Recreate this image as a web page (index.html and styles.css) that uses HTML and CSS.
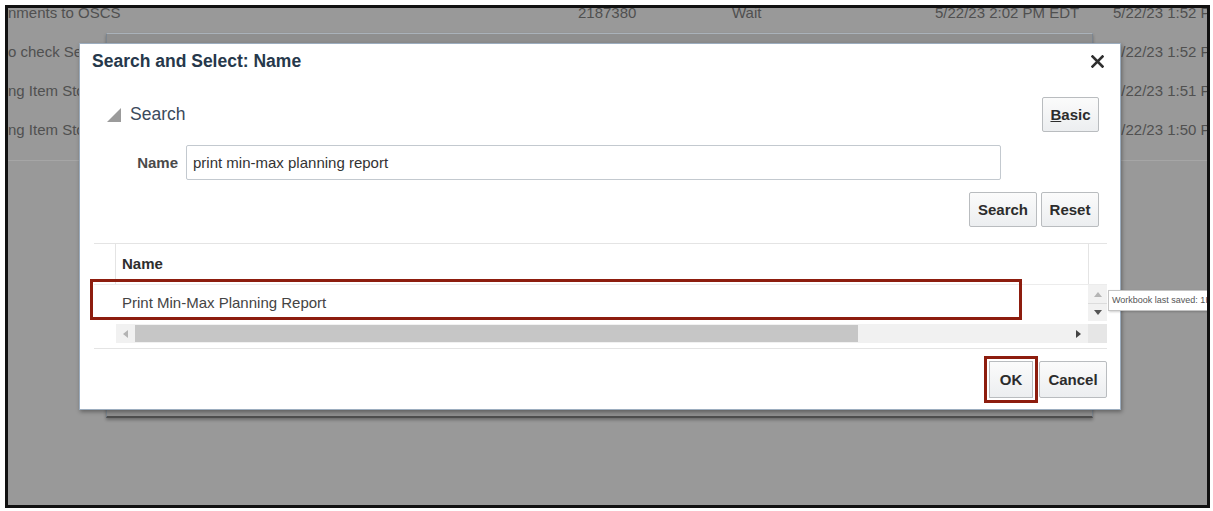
FILE: index.html
```html
<!DOCTYPE html>
<html lang="en">
<head>
    <meta charset="UTF-8">
    <title>Search and Select: Name</title>
    <link rel="stylesheet" href="styles.css">
</head>
<body>
<div class="screen">
    <div class="page-rows">
        <div class="page-row">
            <span class="col-desc">nments to OSCS</span>
            <span class="col-id">2187380</span>
            <span class="col-status">Wait</span>
            <span class="col-date">5/22/23 2:02 PM EDT</span>
            <span class="col-date2">5/22/23 1:52 PM EDT</span>
        </div>
        <div class="page-row">
            <span class="col-desc">o check Se</span>
            <span class="col-id"></span>
            <span class="col-status"></span>
            <span class="col-date"></span>
            <span class="col-date2">5/22/23 1:52 PM EDT</span>
        </div>
        <div class="page-row">
            <span class="col-desc">ng Item Sto</span>
            <span class="col-id"></span>
            <span class="col-status"></span>
            <span class="col-date"></span>
            <span class="col-date2">5/22/23 1:51 PM EDT</span>
        </div>
        <div class="page-row">
            <span class="col-desc">ng Item Sto</span>
            <span class="col-id"></span>
            <span class="col-status"></span>
            <span class="col-date"></span>
            <span class="col-date2">5/22/23 1:50 PM EDT</span>
        </div>
    </div>

    <div class="behind-panel"></div>

    <div class="dialog">
        <div class="dialog-header">
            <span class="dialog-title">Search and Select: Name</span>
            <svg class="close-icon" width="13" height="13" viewBox="0 0 13 13">
                <path d="M1.5 1.5 L11.5 11.5 M11.5 1.5 L1.5 11.5" stroke="#2f2f2f" stroke-width="2.6" stroke-linecap="square"/>
            </svg>
        </div>

        <div class="section-row">
            <div class="section-title">
                <svg width="14" height="14" viewBox="0 0 14 14">
                    <polygon points="14,0 14,14 0,14" fill="#9b9b9b"/>
                </svg>
                <span>Search</span>
            </div>
            <button class="btn btn-basic" type="button"><span class="accesskey">B</span>asic</button>
        </div>

        <div class="field-row">
            <label class="field-label" for="name">Name</label>
            <input id="name" class="field-input" type="text" value="print min-max planning report">
        </div>

        <div class="search-actions">
            <button class="btn btn-search" type="button">Search</button>
            <button class="btn btn-reset" type="button">Reset</button>
        </div>

        <div class="results">
            <div class="results-head">
                <div class="row-header"></div>
                <div class="col-name">Name</div>
                <div class="vscroll-head"></div>
            </div>
            <div class="results-row">
                <div class="row-spacer"></div>
                <div class="cell-name">Print Min-Max Planning Report</div>
                <div class="vscroll">
                    <div class="vscroll-btn">
                        <svg width="8" height="5" viewBox="0 0 8 5"><polygon points="0,5 8,5 4,0" fill="#b4b4b4"/></svg>
                    </div>
                    <div class="vscroll-btn vscroll-down">
                        <svg width="8" height="5" viewBox="0 0 8 5"><polygon points="0,0 8,0 4,5" fill="#555"/></svg>
                    </div>
                </div>
            </div>
            <div class="hscroll-row">
                <div class="row-spacer"></div>
                <div class="hscroll">
                    <div class="hscroll-btn">
                        <svg width="5" height="8" viewBox="0 0 5 8"><polygon points="5,0 5,8 0,4" fill="#b4b4b4"/></svg>
                    </div>
                    <div class="hscroll-track">
                        <div class="hscroll-thumb"></div>
                    </div>
                    <div class="hscroll-btn">
                        <svg width="5" height="8" viewBox="0 0 5 8"><polygon points="0,0 0,8 5,4" fill="#444"/></svg>
                    </div>
                </div>
                <div class="scroll-corner"></div>
            </div>
            <div class="row-highlight"></div>
        </div>

        <div class="dialog-footer">
            <button class="btn btn-ok" type="button">OK</button>
            <button class="btn btn-cancel" type="button">Cancel</button>
        </div>
    </div>

    <div class="tooltip">Workbook last saved: 1H</div>
</div>
</body>
</html>
```

FILE: styles.css
```css
html, body {
    margin: 0;
}

body {
    width: 1213px;
    height: 511px;
    overflow: hidden;
    background: #fff;
    font-family: "Liberation Sans", Arial, sans-serif;
}

.screen {
    position: relative;
    margin: 5px 0 0 5px;
    width: 1199px;
    height: 497px;
    border: 3px solid #111;
    background: #999;
    overflow: hidden;
}

/* page behind the modal */
.page-rows {
    margin-top: -15px;
    padding-bottom: 11px;
    border-bottom: 1px solid #a6a6a6;
    color: #505050;
    font-size: 15px;
}

.page-row {
    display: flex;
    height: 39px;
    line-height: 39px;
    white-space: nowrap;
}

.page-row span {
    flex-shrink: 0;
}

.col-desc {
    width: 570px;
    overflow: hidden;
}

.col-id {
    width: 154px;
}

.col-status {
    width: 203px;
}

.col-date {
    width: 178px;
}

.behind-panel {
    position: absolute;
    left: 98px;
    top: 25px;
    width: 987px;
    height: 385px;
    box-sizing: border-box;
    background: #8f8f8f;
    border: 1px solid #7b858f;
    border-top-color: #aab2ba;
    border-bottom: 2px solid #4d4d4d;
    box-shadow: 0 2px 3px rgba(0, 0, 0, .3);
}

/* modal */
.dialog {
    position: absolute;
    left: 71px;
    top: 35px;
    width: 1042px;
    height: 367px;
    box-sizing: border-box;
    background: #fff;
    border: 1px solid #9cadbf;
    box-shadow: 1px 2px 4px rgba(0, 0, 0, .35);
}

.dialog-header {
    display: flex;
    justify-content: space-between;
    align-items: center;
    padding: 7px 16px 0 12px;
}

.dialog-title {
    font-size: 17.5px;
    line-height: 20px;
    font-weight: bold;
    color: #26384b;
}

.section-row {
    display: flex;
    justify-content: space-between;
    align-items: center;
    margin-top: 26px;
    padding: 0 21px 0 27px;
}

.section-title {
    display: flex;
    align-items: center;
    gap: 9px;
    font-size: 17.5px;
    color: #3b4a5b;
}

.btn {
    box-sizing: border-box;
    height: 35px;
    padding: 0;
    border: 1px solid #b9bcbf;
    border-radius: 2px;
    background: linear-gradient(#fbfbfb, #eceef0);
    font-family: inherit;
    font-size: 15px;
    font-weight: bold;
    color: #2c2c2c;
}

.btn-basic {
    width: 57px;
}

.accesskey {
    text-decoration: underline;
}

.field-row {
    display: flex;
    align-items: center;
    gap: 8px;
    margin-top: 13px;
}

.field-label {
    width: 98px;
    text-align: right;
    font-size: 15px;
    font-weight: bold;
    color: #4a4a4a;
}

.field-input {
    box-sizing: border-box;
    width: 815px;
    height: 35px;
    margin: 0;
    padding: 0 6px;
    border: 1px solid #c3c9cf;
    border-radius: 2px;
    font-family: inherit;
    font-size: 15px;
    color: #333;
}

.search-actions {
    display: flex;
    justify-content: flex-end;
    gap: 4px;
    margin-top: 12px;
    padding-right: 21px;
}

.btn-search {
    width: 68px;
}

.btn-reset {
    width: 58px;
}

/* results table */
.results {
    position: relative;
    margin: 16px 13px 0 14px;
    border-top: 1px solid #e4e4e4;
    border-bottom: 1px solid #e4e4e4;
    padding-bottom: 5px;
}

.results-head {
    display: flex;
    height: 40px;
    border-bottom: 1px solid #ececec;
}

.row-header {
    width: 21px;
    border-right: 1px solid #e4e4e4;
}

.col-name {
    flex: 1;
    padding-left: 6px;
    line-height: 40px;
    font-size: 15px;
    font-weight: bold;
    color: #2e2e2e;
}

.vscroll-head {
    width: 18px;
    border-left: 1px solid #e4e4e4;
}

.results-row {
    display: flex;
    height: 36px;
}

.row-spacer {
    width: 22px;
}

.cell-name {
    flex: 1;
    padding-left: 6px;
    line-height: 36px;
    font-size: 15px;
    color: #444;
}

.vscroll {
    display: flex;
    flex-direction: column;
    width: 19px;
    background: #f1f1f1;
}

.vscroll-btn {
    display: flex;
    justify-content: center;
    align-items: center;
    height: 18px;
}

.vscroll-down {
    border-top: 1px solid #dcdcdc;
    height: 17px;
}

.hscroll-row {
    display: flex;
    height: 19px;
    margin-top: 3px;
}

.hscroll {
    display: flex;
    flex: 1;
    background: #f1f1f1;
}

.hscroll-btn {
    display: flex;
    justify-content: center;
    align-items: center;
    width: 19px;
}

.hscroll-btn:last-child {
    width: 20px;
}

.hscroll-track {
    flex: 1;
    padding: 1px 0;
}

.hscroll-thumb {
    width: 723px;
    height: 17px;
    background: #c6c6c6;
}

.scroll-corner {
    width: 19px;
    background: #e6e6e6;
}

.row-highlight {
    position: absolute;
    left: -4px;
    top: 35px;
    width: 932px;
    height: 41px;
    box-sizing: border-box;
    border: 3px solid #8d1d0e;
}

.dialog-footer {
    display: flex;
    justify-content: flex-end;
    gap: 6px;
    margin-top: 12px;
    padding-right: 13px;
}

.btn-ok {
    width: 44px;
    height: 37px;
    border-radius: 0;
    outline: 3px solid #8d1d0e;
    outline-offset: 2px;
}

.btn-cancel {
    width: 68px;
    height: 37px;
}

.tooltip {
    position: absolute;
    left: 1100px;
    top: 282px;
    height: 19px;
    padding: 0 30px 0 3px;
    background: #fff;
    border: 1px solid #c4c4c4;
    box-shadow: 1px 1px 2px rgba(0, 0, 0, .2);
    font-size: 9px;
    line-height: 19px;
    color: #555;
    white-space: nowrap;
}
```
